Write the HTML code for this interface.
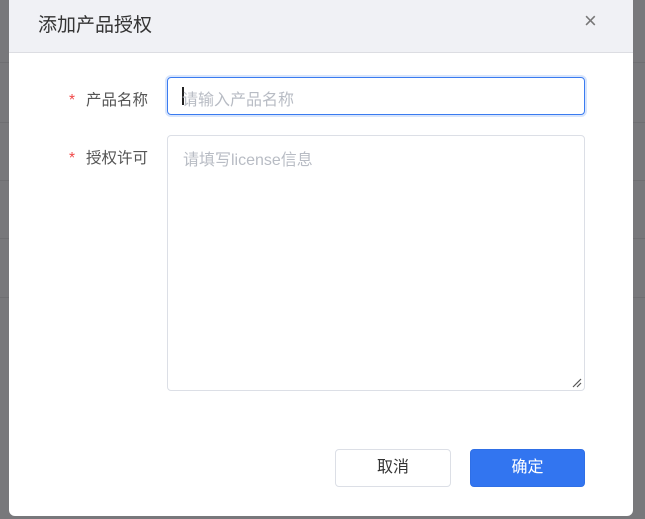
<!DOCTYPE html>
<html><head><meta charset="utf-8"><style>
body{margin:0;width:645px;height:519px;background:#78787b;position:relative;overflow:hidden;font-family:"Liberation Sans","Noto Sans CJK SC",sans-serif}
.ln{position:absolute;left:0;width:645px;height:1px;background:#6f6f72}
.dlg{position:absolute;left:9px;top:-6px;width:624px;height:522px;background:#fff;border-radius:6px;overflow:hidden}
.hd{height:58px;background:#f0f1f5;border-bottom:1px solid #dcdde2;position:relative}
.hd .t{position:absolute;left:29px;top:16px;font-size:19px;color:#333}
.hd .x{position:absolute;left:575px;top:14px;font-size:22px;color:#777;font-weight:300}
.lb{position:absolute;font-size:15.5px;color:#555}
.lb b{color:#f04848;font-weight:normal;margin-right:11px}
.in{position:absolute;left:158px;top:83px;width:416px;height:36px;border:1px solid #3a7bf0;border-radius:4px;box-shadow:0 0 0 2px #d8e5fc}
.in span{position:absolute;left:14px;top:8px;font-size:16px;color:#b8bcc4}
.in i{position:absolute;left:14px;top:9px;width:2px;height:18px;background:#222}
.ta{position:absolute;left:158px;top:141px;width:416px;height:254px;border:1px solid #dcdfe6;border-radius:4px}
.ta span{position:absolute;left:15px;top:10px;font-size:16px;color:#b8bcc4}
.btn{position:absolute;top:455px;height:36px;border-radius:4px;font-size:16px;text-align:center;line-height:36px}
</style></head><body>
<div class="ln" style="top:62px"></div><div class="ln" style="top:122px"></div><div class="ln" style="top:180px"></div><div class="ln" style="top:238px"></div><div class="ln" style="top:297px"></div>
<div class="dlg">
<div class="hd"><span class="t">添加产品授权</span><span class="x">×</span></div>
<div class="lb" style="left:60px;top:94px"><b>*</b>产品名称</div>
<div class="in"><i></i><span>请输入产品名称</span></div>
<div class="lb" style="left:60px;top:152px"><b>*</b>授权许可</div>
<div class="ta"><span>请填写license信息</span>
<svg style="position:absolute;right:2px;bottom:2px" width="10" height="10"><path d="M1 9L9 1M5 9L9 5" stroke="#555" stroke-width="1.2"/></svg></div>
<div class="btn" style="left:326px;width:114px;border:1px solid #dcdfe6;color:#333">取消</div>
<div class="btn" style="left:461px;width:113px;background:#3275f0;border:1px solid #2f6fe6;color:#fff">确定</div>
</div>
</body></html>
